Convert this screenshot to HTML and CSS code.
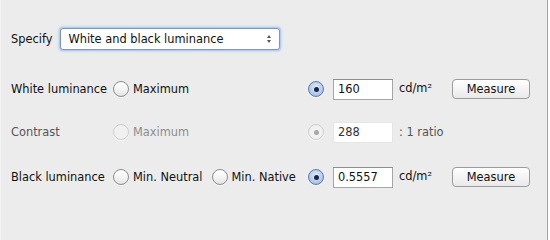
FILE: index.html
```html
<!DOCTYPE html>
<html>
<head>
<meta charset="utf-8">
<link rel="stylesheet" href="styles.css">
</head>
<body>
<div class="window">
  <div class="specify-row">
    <span class="label">Specify</span>
    <div class="select">
      <span class="select-text">White and black luminance</span>
      <span class="arrows"><span class="up"></span><span class="down"></span></span>
    </div>
  </div>
  <div class="grid">
    <div class="row">
      <span class="label">White luminance</span>
      <div class="options">
        <span class="option"><span class="radio"></span><span class="opt-text">Maximum</span></span>
      </div>
      <span class="radio on"></span>
      <div class="field">160</div>
      <span class="unit raised">cd/m²</span>
      <div class="button">Measure</div>
    </div>
    <div class="row r2 disabled">
      <span class="label">Contrast</span>
      <div class="options">
        <span class="option"><span class="radio"></span><span class="opt-text">Maximum</span></span>
      </div>
      <span class="radio on"></span>
      <div class="field">288</div>
      <span class="unit">: 1 ratio</span>
      <span></span>
    </div>
    <div class="row r3">
      <span class="label">Black luminance</span>
      <div class="options">
        <span class="option"><span class="radio"></span><span class="opt-text">Min. Neutral</span></span>
        <span class="option"><span class="radio"></span><span class="opt-text">Min. Native</span></span>
      </div>
      <span class="radio on"></span>
      <div class="field">0.5557</div>
      <span class="unit raised">cd/m²</span>
      <div class="button">Measure</div>
    </div>
  </div>
</div>
</body>
</html>
```
FILE: styles.css
```css
html, body {
  margin: 0;
  padding: 0;
  background: #ffffff;
}
body {
  font-family: "DejaVu Sans", Verdana, sans-serif;
  font-size: 11.4px;
  color: #111;
}
.window {
  width: 548px;
  height: 240px;
  background: #ececec;
  border-left: 1px solid #f4f4f4;
  border-right: 1px solid #a2a2a2;
  padding-left: 10px;
  padding-top: 28px;
  box-sizing: border-box;
}
.specify-row {
  display: flex;
  align-items: center;
  height: 22px;
}
.select {
  margin-left: 8px;
  width: 220px;
  height: 22px;
  box-sizing: border-box;
  background: #fff;
  border: 1px solid #7d97c4;
  border-radius: 3px;
  box-shadow: 0 0 0 1px #b5ccee, 0 0 2px 2px #c9daf2;
  display: flex;
  align-items: center;
  justify-content: space-between;
  padding: 0 8px 0 7px;
}
.arrows {
  display: flex;
  flex-direction: column;
  gap: 2px;
}
.up, .down {
  width: 0;
  height: 0;
  border-left: 2.5px solid transparent;
  border-right: 2.5px solid transparent;
}
.up { border-bottom: 3px solid #555; }
.down { border-top: 3px solid #555; }

.grid {
  margin-top: 28px;
  display: flex;
  flex-direction: column;
}
.row {
  display: grid;
  grid-template-columns: 102px 195px 25px 60px 59px auto;
  align-items: center;
  height: 22px;
}
.r2 { margin-top: 21px; }
.r3 { margin-top: 23px; }
.options {
  display: flex;
  align-items: center;
  gap: 9px;
}
.option {
  display: flex;
  align-items: center;
  gap: 4px;
}
.radio {
  width: 16px;
  height: 16px;
  box-sizing: border-box;
  border-radius: 50%;
  border: 1px solid #8c8c8c;
  background: linear-gradient(#ffffff, #f2f2f2 60%, #e4e4e4);
  box-shadow: 0 1px 0 rgba(255,255,255,0.6);
  display: flex;
  align-items: center;
  justify-content: center;
}
.radio.on {
  border-color: #5d7cae;
  background: radial-gradient(circle at 50% 40%, #e6eefb 0%, #b7cbee 55%, #8daee0 100%);
}
.radio.on::after {
  content: "";
  width: 5px;
  height: 5px;
  border-radius: 50%;
  background: #1b2640;
}
.field {
  height: 21px;
  box-sizing: border-box;
  background: #fff;
  border: 1px solid #a6a6a6;
  border-top-color: #8e8e8e;
  padding-left: 4px;
  display: flex;
  align-items: center;
}
.unit {
  padding-left: 6px;
}
.unit.raised {
  padding-bottom: 3px;
}
.button {
  width: 78px;
  height: 20px;
  box-sizing: border-box;
  border: 1px solid #9c9c9c;
  border-radius: 4px;
  background: linear-gradient(#ffffff, #f4f4f4 50%, #e9e9e9);
  display: flex;
  align-items: center;
  justify-content: center;
}
.disabled .label { color: #555; }
.disabled .opt-text { color: #8c8c8c; }
.disabled .radio {
  border-color: #cdcdcd;
  background: #f1f1f1;
}
.disabled .radio.on {
  border-color: #cdcdcd;
  background: #f1f1f1;
}
.disabled .radio.on::after { background: #a8a8a8; }
.disabled .field {
  border-color: #e6e6e6;
  color: #333;
}
.disabled .unit { color: #555; }
```
